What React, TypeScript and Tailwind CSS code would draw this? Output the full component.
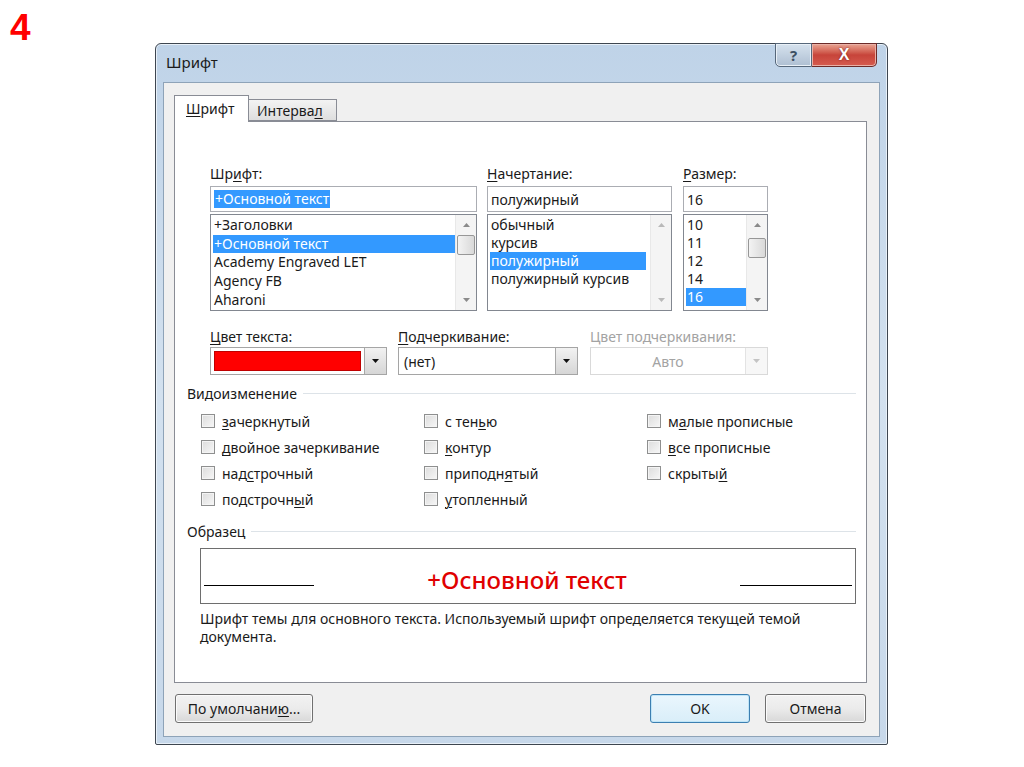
import React from "react";

const U = ({ children }: { children: React.ReactNode }) => (
  <span className="underline underline-offset-[2px] decoration-[1px]">{children}</span>
);

const Tri = ({ up, color = "#4a4a4a" }: { up?: boolean; color?: string }) => (
  <svg width="7" height="4" viewBox="0 0 7 4">
    {up ? <path d="M0 4 L3.5 0 L7 4 Z" fill={color} /> : <path d="M0 0 L7 0 L3.5 4 Z" fill={color} />}
  </svg>
);

const Scroll = ({ thumb, thumbTop = 0, color = "#8a8a8a" }: { thumb?: boolean; thumbTop?: number; color?: string }) => (
  <div className="w-[21px] shrink-0 flex flex-col items-center bg-[#f4f4f4] border-l border-[#e8e8e8] py-[8px]">
    <Tri up color={color} />
    <div className="flex-1 w-full flex flex-col items-center">
      {thumb && (
        <div
          className="w-[18px] h-[20px] rounded-[2px] border border-[#979797] bg-gradient-to-r from-[#f3f3f3] to-[#d9d9d9] flex items-center justify-center"
          style={{ marginTop: thumbTop }}
        />
      )}
    </div>
    <Tri color={color} />
  </div>
);

const Check = ({ children }: { children: React.ReactNode }) => (
  <div className="flex items-center h-[26px]">
    <div className="w-[14px] h-[14px] border border-[#8e8f8f] bg-gradient-to-br from-[#dcdcdc] to-[#f7f7f7] shadow-[inset_0_0_0_1px_#f4f4f4]" />
    <span className="ml-[7px]">{children}</span>
  </div>
);

const DropBtn = ({ disabled }: { disabled?: boolean }) => (
  <div
    className={
      "w-[22px] h-full flex items-center justify-center border-l " +
      (disabled
        ? "border-[#e3e3e3] bg-[#f7f7f7]"
        : "border-[#a8a8a8] bg-gradient-to-b from-[#f2f2f2] to-[#d6d6d6]")
    }
  >
    <Tri color={disabled ? "#c4c4c4" : "#111"} />
  </div>
);

const Btn = ({ children, w, def }: { children: React.ReactNode; w: string; def?: boolean }) => (
  <div
    className={
      "h-[29px] rounded-[3px] border flex items-center justify-center " +
      w +
      " " +
      (def
        ? "border-[#3c7fb1] bg-gradient-to-b from-[#eaf6fd] to-[#d9eef9] shadow-[inset_0_0_0_1px_#bfe5f8]"
        : "border-[#707070] bg-gradient-to-b from-[#f2f2f2] via-[#ebebeb] to-[#d8d8d8] shadow-[inset_0_0_0_1px_#fbfbfb]")
    }
  >
    {children}
  </div>
);

export default function App() {
  return (
    <div className="relative w-[1024px] h-[767px] bg-white text-[14px] text-[#1a1a1a] font-['Noto_Sans',sans-serif] overflow-hidden">
      <div className="absolute left-[10px] top-[9px] text-[37px] leading-none font-bold text-[#ff0000] font-['Liberation_Sans',sans-serif]">
        4
      </div>
      <div className="pt-[43px] pl-[155px]">
        <div className="w-[733px] h-[702px] border border-[#3e4650] rounded-t-[6px] rounded-b-[2px] bg-gradient-to-b from-[#bfd3e8] via-[#d3e1ef] to-[#c7d8ea] flex flex-col shadow-[inset_0_0_0_1px_#e8f0f8]">
          {/* title bar */}
          <div className="h-[38px] flex items-start shrink-0">
            <div className="pl-[10px] pt-[9px] text-[15px] leading-[19px] text-[#1b1b1b]">Шрифт</div>
            <div className="flex-1" />
            <div className="flex mr-[10px] -mt-px">
              <div className="w-[37px] h-[24px] rounded-bl-[5px] border border-[#56677a] bg-gradient-to-b from-[#d6e2ee] to-[#aebfd2] flex items-center justify-center text-[#3d4f63] text-[15px] font-bold leading-none shadow-[inset_0_0_0_1px_#e9f0f7]">
                ?
              </div>
              <div className="w-[65px] h-[24px] rounded-br-[5px] border border-l-0 border-[#6b2a28] bg-gradient-to-b from-[#e8a493] via-[#c7443a] to-[#d55b4f] flex items-center justify-center shadow-[inset_0_0_0_1px_#eab0a6]">
                <span className="text-white font-bold text-[16px] leading-none font-['Liberation_Sans',sans-serif] [text-shadow:0_0_2px_#6b1a14]">X</span>
              </div>
            </div>
          </div>
          {/* client */}
          <div className="mx-[7px] mb-[7px] flex-1 border border-[#8ea3b8] bg-[#f0f0f0] flex flex-col pt-[12px] pl-[10px] pr-[13px]">
            {/* tabs */}
            <div className="flex items-end h-[26px] relative z-10">
              <div className="w-[75px] h-[27px] -mb-px bg-white border border-[#898c95] border-b-0 flex items-start pt-[3px] pl-[11px] leading-[19px]">
                <span><U>Ш</U>рифт</span>
              </div>
              <div className="w-[88px] h-[22px] border border-l-0 border-[#898c95] bg-gradient-to-b from-[#f3f3f3] to-[#dedede] flex items-center pl-[8px] leading-[19px] pt-px">
                <span>Интерва<U>л</U></span>
              </div>
            </div>
            {/* panel */}
            <div className="w-[693px] h-[562px] bg-white border border-[#898c95] pl-[12px] pr-[10px] pt-[43px] flex flex-col">
              {/* row 1 */}
              <div className="flex ml-[23px] leading-[17px]">
                <div className="w-[267px] flex flex-col">
                  <div>Шр<U>и</U>фт:</div>
                  <div className="mt-[4px] h-[26px] border border-[#abadb3] flex items-center px-[3px]">
                    <span className="bg-[#3399ff] text-white px-[1px] leading-[18px]">+Основной текст</span>
                  </div>
                  <div className="mt-[2px] h-[97px] border border-[#828790] flex">
                    <div className="flex-1 pt-[1px] pl-[2px] leading-[18.7px]">
                      <div className="px-[1px]">+Заголовки</div>
                      <div className="px-[1px] bg-[#3399ff] text-white">+Основной текст</div>
                      <div className="px-[1px]">Academy Engraved LET</div>
                      <div className="px-[1px]">Agency FB</div>
                      <div className="px-[1px]">Aharoni</div>
                    </div>
                    <Scroll thumb thumbTop={8} />
                  </div>
                </div>
                <div className="w-[185px] ml-[10px] flex flex-col">
                  <div><U>Н</U>ачертание:</div>
                  <div className="mt-[4px] h-[26px] border border-[#abadb3] flex items-center px-[3px]">полужирный</div>
                  <div className="mt-[2px] h-[97px] border border-[#828790] flex">
                    <div className="flex-1 pt-[1px] pl-[2px] pr-[4px] leading-[18px]">
                      <div className="px-[1px]">обычный</div>
                      <div className="px-[1px]">курсив</div>
                      <div className="px-[1px] bg-[#3399ff] text-white">полужирный</div>
                      <div className="px-[1px]">полужирный курсив</div>
                    </div>
                    <Scroll color="#b9b9b9" />
                  </div>
                </div>
                <div className="w-[85px] ml-[11px] flex flex-col">
                  <div><U>Р</U>азмер:</div>
                  <div className="mt-[4px] h-[26px] border border-[#abadb3] flex items-center px-[3px]">16</div>
                  <div className="mt-[2px] h-[97px] border border-[#828790] flex">
                    <div className="flex-1 pt-[1px] pl-[2px] leading-[18px]">
                      <div className="px-[1px]">10</div>
                      <div className="px-[1px]">11</div>
                      <div className="px-[1px]">12</div>
                      <div className="px-[1px]">14</div>
                      <div className="px-[1px] bg-[#3399ff] text-white">16</div>
                    </div>
                    <Scroll thumb thumbTop={11} />
                  </div>
                </div>
              </div>
              {/* row 2 */}
              <div className="flex ml-[23px] mt-[17px] leading-[17px]">
                <div className="w-[177px] flex flex-col">
                  <div><U>Ц</U>вет текста:</div>
                  <div className="mt-[2px] h-[28px] border border-[#a5a5a5] flex bg-white">
                    <div className="flex-1 p-[3px]">
                      <div className="h-full bg-[#ff0000] border border-[#c00000]" />
                    </div>
                    <DropBtn />
                  </div>
                </div>
                <div className="w-[180px] ml-[11px] flex flex-col">
                  <div><U>П</U>одчеркивание:</div>
                  <div className="mt-[2px] h-[28px] border border-[#a5a5a5] flex bg-white">
                    <div className="flex-1 flex items-center pl-[5px]">(нет)</div>
                    <DropBtn />
                  </div>
                </div>
                <div className="w-[178px] ml-[12px] flex flex-col text-[#a3a3a3]">
                  <div>Цвет подчеркивания:</div>
                  <div className="mt-[2px] h-[28px] border border-[#d9d9d9] flex bg-white">
                    <div className="flex-1 flex items-center justify-center">Авто</div>
                    <DropBtn disabled />
                  </div>
                </div>
              </div>
              {/* Видоизменение */}
              <div className="flex items-center mt-[10px] leading-[17px]">
                <span>Видоизменение</span>
                <div className="flex-1 ml-[6px] h-px bg-[#dde3e8]" />
              </div>
              <div className="grid grid-cols-[223px_223px_1fr] ml-[14px] mt-[6px] leading-[17px]">
                <div className="flex flex-col">
                  <Check><U>з</U>ачеркнутый</Check>
                  <Check><U>д</U>войное зачеркивание</Check>
                  <Check>над<U>с</U>трочный</Check>
                  <Check>подстрочн<U>ы</U>й</Check>
                </div>
                <div className="flex flex-col">
                  <Check>с тен<U>ь</U>ю</Check>
                  <Check><U>к</U>онтур</Check>
                  <Check>приподн<U>я</U>тый</Check>
                  <Check><U>у</U>топленный</Check>
                </div>
                <div className="flex flex-col">
                  <Check>м<U>а</U>лые прописные</Check>
                  <Check><U>в</U>се прописные</Check>
                  <Check>скрыты<U>й</U></Check>
                </div>
              </div>
              {/* Образец */}
              <div className="flex items-center mt-[11px] leading-[17px]">
                <span>Образец</span>
                <div className="flex-1 ml-[6px] h-px bg-[#dde3e8]" />
              </div>
              <div className="ml-[13px] mt-[8px] h-[56px] border border-[#6e6e6e] flex items-end pb-[17px] px-[3px]">
                <div className="w-[110px] h-px bg-black" />
                <div className="flex-1 flex justify-center">
                  <span className="text-[24px] leading-[26px] font-medium text-[#e00000] -mb-[7px]">+Основной текст</span>
                </div>
                <div className="w-[112px] h-px bg-black" />
              </div>
              <div className="ml-[13px] mt-[6px] leading-[18px] pr-[20px]">
                Шрифт темы для основного текста. Используемый шрифт определяется текущей темой документа.
              </div>
            </div>
            {/* buttons */}
            <div className="flex items-center mt-[11px] pl-px">
              <Btn w="w-[138px]">
                <span>По умолчани<U>ю</U>...</span>
              </Btn>
              <div className="flex-1" />
              <Btn w="w-[100px]" def>
                OK
              </Btn>
              <div className="w-[15px]" />
              <Btn w="w-[101px]">Отмена</Btn>
            </div>
          </div>
        </div>
      </div>
    </div>
  );
}
